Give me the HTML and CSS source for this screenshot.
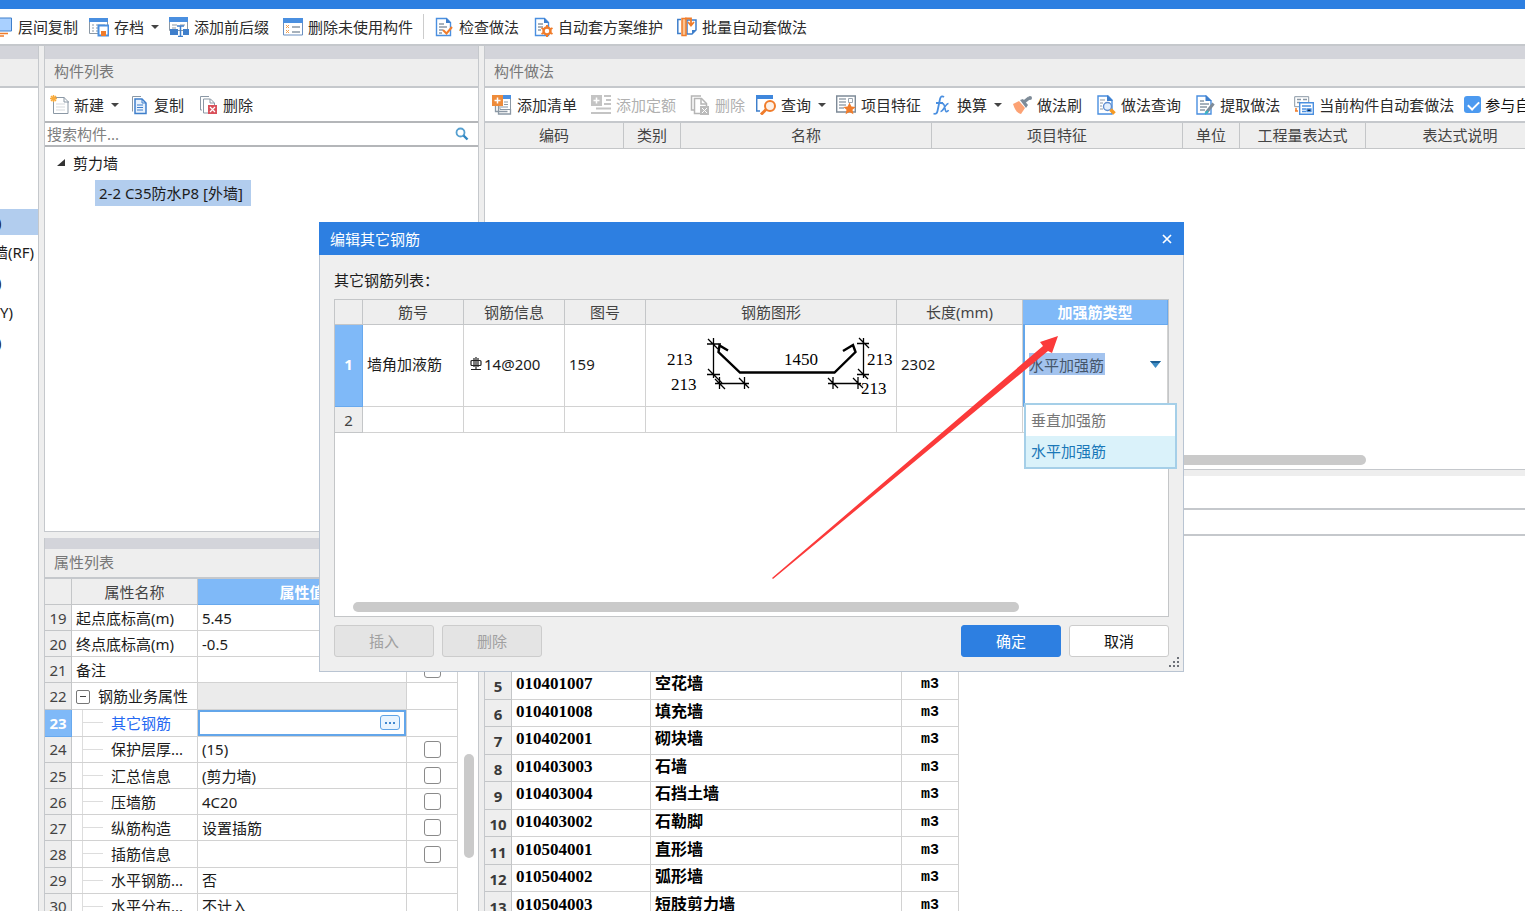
FILE: index.html
```html
<!DOCTYPE html>
<html lang="zh-CN">
<head>
<meta charset="utf-8">
<title>编辑其它钢筋</title>
<link rel="stylesheet" href="styles.css">
</head>
<body>
<div class="app">
  <div class="window-edge"></div>
  <div class="toolbar main-toolbar">
    <button class="tool first"><svg class="ico" viewBox="0 0 20 20"><path d="M3 1h15.500v13H3z" fill="#a9d0ff" stroke="#3f7fcb"/><path d="M5 16.500h10M5 19h6" stroke="#f07c2b" stroke-width="1.500"/></svg>层间复制</button>
    <button class="tool drop"><svg class="ico" viewBox="0 0 20 20"><path d="M.5 1.500h18v15H.5z" fill="#fff" stroke="#8b98a5"/><path d="M0 1h19v4H0z" fill="#4a8fe0"/><path d="M3 8h2M7 8h9M3 11h2M7 11h3M3 14h2M7 14h2" stroke="#8b98a5"/><path d="M9.500 8.500h10v10h-10z" fill="#fff" stroke="#4a8fe0" stroke-width="2"/><path d="M12 14h5v5h-5z" fill="#f07c2b"/></svg>存档<i class="caret"></i></button>
    <button class="tool"><svg class="ico" viewBox="0 0 20 20"><path d="M.5 1.500h18v12H.5z" fill="#fff" stroke="#8b98a5"/><path d="M0 0h19v5H0z" fill="#4a8fe0"/><path d="M3 8h5M11 8h5M3 11h4" stroke="#8b98a5"/><path d="M1 12h8v6H1zM14 12h6v6h-6z" fill="#3f7fcb"/><path d="M8 9h7M11.500 9v10M9 19.500h5" stroke="#3f7fcb" stroke-width="1.500"/></svg>添加前后缀</button>
    <button class="tool"><svg class="ico" viewBox="0 0 20 20"><path d="M.5 2h19v16H.5z" fill="#fff" stroke="#6a8fc0"/><path d="M0 1h20v5H0z" fill="#4a8fe0"/><path d="M3 8l3 3M6 8l-3 3M3 13l3 3M6 13l-3 3" stroke="#f5a04d"/><path d="M9 10h8M9 15h8" stroke="#8b98a5" stroke-width="1.500"/></svg>删除未使用构件</button>
    <span class="divider"></span>
    <button class="tool"><svg class="ico" viewBox="0 0 20 20"><path d="M2.500 1.500h10l4 4v13h-14z" fill="#fff" stroke="#4a8fe0" stroke-width="1.400"/><path d="M12 1v5h5z" fill="#3f7fcb"/><path d="M5 7h5M5 10h8M5 13h4M5 16h3" stroke="#8b98a5" stroke-width="1.300"/><path d="M9 13l3.500 3.500L18 10" fill="none" stroke="#f07c2b" stroke-width="2"/></svg>检查做法</button>
    <button class="tool"><svg class="ico" viewBox="0 0 20 20"><path d="M2.500 1.500h9l4 4v13h-13z" fill="#fff" stroke="#4a8fe0" stroke-width="1.400"/><path d="M11 1v5h5z" fill="#3f7fcb"/><path d="M5 7h5M5 10h5M5 13h3" stroke="#8b98a5" stroke-width="1.300"/><circle cx="14" cy="14" r="3.500" fill="#fff" stroke="#f07c2b" stroke-width="2.500"/><path d="M14 8v3M14 17v3M8.500 11l2.500 1.500M17 15.500l2.500 1.500M8.500 17l2.500-1.500M17 12.500l2.500-1.500" stroke="#f07c2b" stroke-width="2"/></svg>自动套方案维护</button>
    <button class="tool"><svg class="ico" viewBox="0 0 20 20"><path d="M4 2.500H.8v14H4" fill="none" stroke="#3f7fcb" stroke-width="1.500"/><path d="M10 3h9v10l-4 4h-5z" fill="#fff" stroke="#3f7fcb" stroke-width="1.500"/><path d="M15 17v-4h4z" fill="#3f7fcb"/><path d="M5 1.500h4v17H5z" fill="#fbc392" stroke="#f07c2b" stroke-width="1.500"/><path d="M8 1.500h6v6M11 5l3 3.500L17 5" fill="none" stroke="#f07c2b" stroke-width="1.800"/></svg>批量自动套做法</button>
  </div>

  <div class="workspace">
    <aside class="pane nav-pane">
      <div class="strip"></div>
      <div class="pane-title"></div>
      <ul class="nav-list">
        <li class="sel">)</li>
        <li class="mid">墙(RF)</li>
        <li>)</li>
        <li class="short">Y)</li>
        <li>)</li>
      </ul>
    </aside>

    <div class="column mid-column">
      <section class="pane grow">
        <div class="strip"></div>
        <h2 class="pane-title">构件列表</h2>
        <div class="toolbar">
          <button class="tool drop"><svg class="ico" viewBox="0 0 20 20"><path d="M6 2.500h9l4 4v12H4.500V6" fill="#fff" stroke="#8b98a5"/><path d="M15 2v5h5" fill="none" stroke="#8b98a5"/><path d="M7 9h9M7 12h9M7 15h9" stroke="#d5d9dd"/><path d="M2 1l5 5M7 1L2 6M4.500 0v7M1 3.500h7" stroke="#f9ab3c" stroke-width="1.500"/></svg>新建<i class="caret"></i></button>
          <button class="tool"><svg class="ico" viewBox="0 0 20 20"><path d="M12 1.500H3.500v15" fill="none" stroke="#8b98a5"/><path d="M6 4h7l4 4v10.500H6z" fill="#e9f2fd" stroke="#3f7fcb" stroke-width="1.500"/><path d="M13 4v4h4M8 10h6M8 12.500h6M8 15h6" fill="none" stroke="#3f7fcb"/></svg>复制</button>
          <button class="tool"><svg class="ico" viewBox="0 0 20 20"><path d="M11 1.500H2.500V15H4" fill="none" stroke="#8b98a5"/><path d="M5.500 4h7l4 4v10h-11z" fill="#fff" stroke="#8b98a5"/><path d="M12 4v4h4" fill="none" stroke="#8b98a5"/><path d="M10 10h9v9h-9z" fill="#d9505a"/><path d="M12 12l5 5M17 12l-5 5" stroke="#fff" stroke-width="1.200"/></svg>删除</button>
        </div>
        <div class="search">
          <input type="text" placeholder="搜索构件..." aria-label="搜索构件">
          <svg class="lens" viewBox="0 0 14 14"><circle cx="5.500" cy="5.500" r="4" fill="none" stroke="#56a0d0" stroke-width="1.800"/><path d="M8.500 8.500L12.500 12.500" stroke="#2f86c2" stroke-width="2.400"/></svg>
        </div>
        <ul class="tree">
          <li class="tree-root"><svg class="twisty" viewBox="0 0 8 8"><path d="M8 0v7H0z" fill="#333"/></svg>剪力墙</li>
          <li><span class="tree-sel">2-2 C35防水P8 [外墙]</span></li>
        </ul>
      </section>

      <section class="pane props-pane">
        <div class="strip"></div>
        <h2 class="pane-title">属性列表</h2>
        <div class="props-body">
          <table class="grid props">
            <colgroup><col class="w-num"><col class="w-name"><col class="w-value"><col class="w-check"></colgroup>
            <thead><tr><th></th><th>属性名称</th><th class="active">属性值</th><th></th></tr></thead>
            <tbody>
              <tr><th>19</th><td>起点底标高(m)</td><td>5.45</td><td></td></tr>
              <tr><th>20</th><td>终点底标高(m)</td><td>-0.5</td><td></td></tr>
              <tr><th>21</th><td>备注</td><td></td><td class="chk"><input type="checkbox" aria-label="备注"></td></tr>
              <tr><th>22</th><td><button class="fold" aria-label="折叠"></button>钢筋业务属性</td><td class="shade"></td><td></td></tr>
              <tr><th class="active">23</th><td class="child link">其它钢筋</td><td class="editing"><div class="editor"><button class="more" aria-label="编辑"><i></i><i></i><i></i></button></div></td><td></td></tr>
              <tr><th>24</th><td class="child">保护层厚...</td><td>(15)</td><td class="chk"><input type="checkbox" aria-label="保护层厚"></td></tr>
              <tr><th>25</th><td class="child">汇总信息</td><td>(剪力墙)</td><td class="chk"><input type="checkbox" aria-label="汇总信息"></td></tr>
              <tr><th>26</th><td class="child">压墙筋</td><td>4C20</td><td class="chk"><input type="checkbox" aria-label="压墙筋"></td></tr>
              <tr><th>27</th><td class="child">纵筋构造</td><td>设置插筋</td><td class="chk"><input type="checkbox" aria-label="纵筋构造"></td></tr>
              <tr><th>28</th><td class="child">插筋信息</td><td></td><td class="chk"><input type="checkbox" aria-label="插筋信息"></td></tr>
              <tr><th>29</th><td class="child">水平钢筋...</td><td>否</td><td></td></tr>
              <tr><th>30</th><td class="child">水平分布...</td><td>不计入</td><td></td></tr>
            </tbody>
          </table>
          <div class="vscroll"><div class="vthumb"></div></div>
        </div>
      </section>
    </div>

    <div class="column right-column">
      <section class="pane grow open-right">
        <div class="strip"></div>
        <h2 class="pane-title">构件做法</h2>
        <div class="toolbar">
          <button class="tool"><svg class="ico" viewBox="0 0 20 20"><path d="M8 1.500h10.500v13H8z" fill="#fff" stroke="#8b98a5"/><path d="M10 0h9v4h-9z" fill="#4a8fe0"/><path d="M3.500 11v5.500h12M6.500 11v8h12V14" fill="none" stroke="#8b98a5" stroke-width="1.300"/><path d="M12 7h4M12 9.500h4M9 12h7" stroke="#8b98a5"/><path d="M0 0h11v11H0z" fill="#ee8b3a"/><path d="M5.500 2.500v6M2.500 5.500h6" stroke="#fff" stroke-width="1.500"/></svg>添加清单</button>
          <button class="tool" disabled><svg class="ico" viewBox="0 0 20 20"><path d="M0 0h11v11H0z" fill="#c4c4c4"/><path d="M5.500 2.500v6M2.500 5.500h6" stroke="#fff" stroke-width="1.500"/><path d="M13 1h7M15 5h5M13 9h7M5 13.500h15M0 18h20" stroke="#c4c4c4" stroke-width="2"/></svg>添加定额</button>
          <button class="tool" disabled><svg class="ico" viewBox="0 0 20 20"><path d="M11 1H1.500v14H4" fill="none" stroke="#b5b5b5" stroke-width="1.500"/><path d="M4.500 3.500h7l5 5v10h-12z" fill="#fff" stroke="#b5b5b5" stroke-width="1.500"/><path d="M11 3v6h6" fill="none" stroke="#b5b5b5" stroke-width="1.500"/><path d="M10 11h9v9h-9z" fill="#bbb"/><path d="M12 13l5 5M17 13l-5 5" stroke="#fff"/></svg>删除</button>
          <button class="tool drop"><svg class="ico" viewBox="0 0 20 20"><path d="M.7 3v13H4M16 6v2" fill="none" stroke="#3f7fcb" stroke-width="1.500"/><path d="M0 0h17v4H0z" fill="#3f87dc"/><circle cx="14" cy="11" r="5" fill="#fdf0e6" stroke="#f07c2b" stroke-width="2"/><path d="M10 14.500L5 19.500" stroke="#f07c2b" stroke-width="3"/></svg>查询<i class="caret"></i></button>
          <button class="tool"><svg class="ico" viewBox="0 0 20 20"><path d="M.7 1h18.600v16H.7z" fill="#fff" stroke="#7e8b98" stroke-width="1.400"/><path d="M3 4h7M3 7h7M3 10h7M3 13h5" stroke="#9aa5b0" stroke-width="1.500"/><path d="M12.500 3.500h4v4h-4z" fill="none" stroke="#9aa5b0"/><path d="M13.500 7.500l1.900 3.900 4.300.5-3.200 2.900.9 4.500-3.900-2.200-3.900 2.200.9-4.500-3.200-2.900 4.300-.5z" fill="#f07c2b"/></svg>项目特征</button>
          <button class="tool drop"><svg class="ico" viewBox="0 0 20 20"><path d="M12 2c-2-1.500-3.500-.5-4 2L5.500 16c-.5 2.500-2 3.500-4 2.500M4 8h7" fill="none" stroke="#4a8fe0" stroke-width="1.800"/><path d="M9.500 8.500c4-1 3 7 4.500 8 1 .5 2-.5 2.500-1.500M16.500 8.500c-3 0-5 8-8 8" fill="none" stroke="#4a8fe0" stroke-width="1.600"/></svg>换算<i class="caret"></i></button>
          <button class="tool"><svg class="ico" viewBox="0 0 20 20"><path d="M7 6l6 7-4 6c-4-1-6-4-8-10z" fill="#fca274"/><path d="M8 5l3-1 5 6-2 3z" fill="#7e8b98"/><path d="M12 7l5-4" stroke="#7e8b98" stroke-width="3.500"/><circle cx="18" cy="3" r="2" fill="#7e8b98"/></svg>做法刷</button>
          <button class="tool"><svg class="ico" viewBox="0 0 20 20"><path d="M2 1h10l4 4v14H2z" fill="#fff" stroke="#4a8fe0" stroke-width="1.400"/><path d="M11 0v6h6z" fill="#3f7fcb"/><path d="M4 5h5M4 8h3M4 11h2M4 14h3" stroke="#8b98a5"/><circle cx="11.500" cy="11.500" r="4" fill="#e3effc" stroke="#5f8ed0" stroke-width="1.400"/><path d="M14.500 14.500l4 4" stroke="#f59a23" stroke-width="3.500"/></svg>做法查询</button>
          <button class="tool"><svg class="ico" viewBox="0 0 20 20"><path d="M2 1h9l5 5v13H2z" fill="#fff" stroke="#4a8fe0" stroke-width="1.400"/><path d="M10.500 0v6H17z" fill="#3f7fcb"/><path d="M5 6h4M5 9h9M5 12h7M5 15h5" stroke="#8b98a5" stroke-width="1.300"/><path d="M18.500 8.500L11 18" stroke="#7e8b98" stroke-width="3"/><path d="M13 16l-3 3" stroke="#35b6c9" stroke-width="2"/></svg>提取做法</button>
          <button class="tool"><svg class="ico" viewBox="0 0 20 20"><path d="M.7 1.700h14v10H.7z" fill="#fff" stroke="#8b98a5"/><path d="M3 4.500h4M9 4.500h4M3 7.500h3" stroke="#8b98a5" stroke-width="1.500"/><path d="M5.700 7.700h13.600v11.600H5.700z" fill="#fff" stroke="#4a8fe0" stroke-width="1.400"/><path d="M8 11h9M8 14h4M8 16.500h4M13 14h4v2.500h-4z" stroke="#4a8fe0" stroke-width="1.300"/><path d="M2 13v3M1 16h3" stroke="#f07c2b" stroke-width="1.500"/></svg>当前构件自动套做法</button>
          <label class="join"><input type="checkbox" checked>参与自动套</label>
        </div>
        <table class="grid works-head">
          <colgroup><col class="c-code"><col class="c-kind"><col class="c-wide"><col class="c-wide"><col class="c-kind"><col class="c-expr"><col></colgroup>
          <thead><tr><th>编码</th><th>类别</th><th>名称</th><th>项目特征</th><th>单位</th><th>工程量表达式</th><th>表达式说明</th></tr></thead>
        </table>
        <div class="works-empty"><div class="hthumb"></div></div>
      </section>
      <section class="library">
        <div class="lib-tabs"></div>
        <div class="lib-filter"></div>
        <div class="lib-body">
          <table class="grid lib">
            <colgroup><col class="w-num"><col class="c-code"><col class="c-wide"><col class="c-kind"></colgroup>
            <tbody>
              <tr><th>5</th><td>010401007</td><td>空花墙</td><td class="unit">m3</td></tr>
              <tr><th>6</th><td>010401008</td><td>填充墙</td><td class="unit">m3</td></tr>
              <tr><th>7</th><td>010402001</td><td>砌块墙</td><td class="unit">m3</td></tr>
              <tr><th>8</th><td>010403003</td><td>石墙</td><td class="unit">m3</td></tr>
              <tr><th>9</th><td>010403004</td><td>石挡土墙</td><td class="unit">m3</td></tr>
              <tr><th>10</th><td>010403002</td><td>石勒脚</td><td class="unit">m3</td></tr>
              <tr><th>11</th><td>010504001</td><td>直形墙</td><td class="unit">m3</td></tr>
              <tr><th>12</th><td>010504002</td><td>弧形墙</td><td class="unit">m3</td></tr>
              <tr><th>13</th><td>010504003</td><td>短肢剪力墙</td><td class="unit">m3</td></tr>
            </tbody>
          </table>
        </div>
      </section>
    </div>
  </div>

  <div class="dialog" role="dialog" aria-labelledby="dlg-title">
    <div class="dialog-bar">
      <h1 id="dlg-title">编辑其它钢筋</h1>
      <button class="close" aria-label="关闭"><svg viewBox="0 0 10 10"><path d="M1 1l8 8M9 1L1 9" stroke="#fff" stroke-width="1.700"/></svg></button>
    </div>
    <div class="dialog-body">
      <p class="caption">其它钢筋列表：</p>
      <div class="list-box">
        <table class="grid bars">
          <colgroup><col class="b-num"><col class="b-mid"><col class="b-mid"><col class="b-small"><col class="c-wide"><col class="c-expr"><col></colgroup>
          <thead><tr><th></th><th>筋号</th><th>钢筋信息</th><th>图号</th><th>钢筋图形</th><th>长度(mm)</th><th class="active">加强筋类型</th></tr></thead>
          <tbody>
            <tr class="tall">
              <th class="active">1</th><td>墙角加液筋</td>
              <td><span class="rebar"><svg class="grade" viewBox="0 0 12 14"><path d="M6 0v13M1 12.500h10M2 3.500h8a1 1 0 0 1 1 1v3a1 1 0 0 1-1 1H2a1 1 0 0 1-1-1v-3a1 1 0 0 1 1-1zM4 1v9M8 1v9" fill="none" stroke="#222" stroke-width="1.200"/></svg>14@200</span></td>
              <td>159</td>
              <td class="figure">
                <svg class="shape" viewBox="0 0 250 80">
                  <g fill="none" stroke="#000" stroke-width="1.300">
                    <path d="M67.500 13v40M61 19h14M61 49.500h13M62 14l10 10M62 44l14 14"/>
                    <path d="M69 58.500h34M73.500 52v12M98.500 52v12M69 54l10 10M93 53l10 10"/>
                    <path d="M217.500 13v40M211 18.500h12M211 49.500h12M213 13l10 10M212 44l10 10"/>
                    <path d="M182 58.500h33M187 52v12M212 52v12M182 53l10 10M207 53l10 10"/>
                  </g>
                  <path d="M82 25.500L73.500 20.500L72.500 27L94 47.500H188.500L209.500 27L207 20L197 26" fill="none" stroke="#000" stroke-width="2.400"/>
                  <g class="dims"><text x="21" y="40">213</text><text x="25" y="65">213</text><text x="138" y="40">1450</text><text x="221" y="40">213</text><text x="215" y="69">213</text></g>
                </svg>
              </td>
              <td>2302</td>
              <td class="combo-cell">
                <div class="combo">
                  <input type="text" role="combobox" aria-expanded="true" aria-controls="kinds" aria-label="加强筋类型" value="水平加强筋">
                  <svg class="combo-arrow" viewBox="0 0 11 7"><path d="M0 0h11L5.500 7z" fill="#3d8cc4"/><path d="M0 0h11L9 2H2z" fill="#1d5f94"/></svg>
                </div>
                <ul class="options" id="kinds" role="listbox">
                  <li role="option">垂直加强筋</li>
                  <li role="option" class="on" aria-selected="true">水平加强筋</li>
                </ul>
              </td>
            </tr>
            <tr><th>2</th><td></td><td></td><td></td><td></td><td></td><td></td></tr>
          </tbody>
        </table>
        <div class="dlg-thumb"></div>
      </div>
      <div class="actions">
        <button class="btn" disabled>插入</button>
        <button class="btn" disabled>删除</button>
        <span class="spacer"></span>
        <button class="btn primary">确定</button>
        <button class="btn plain">取消</button>
      </div>
    </div>
    <svg class="grip" viewBox="0 0 11 11"><path d="M8 0h2v2H8zM8 4h2v2H8zM4 4h2v2H4zM8 8h2v2H8zM4 8h2v2H4zM0 8h2v2H0z" fill="#6d7178"/></svg>
  </div>

  <svg class="pointer" viewBox="0 0 290 246"><path d="M286 2L268 8L271 12L0 244L1 245L276 17L280 19Z" fill="#fb3a3a"/></svg>
</div>
</body>
</html>
```
FILE: styles.css
```css
* { box-sizing: border-box; }
body {
  margin: 0;
  font: 15px/20px "Noto Sans", "Noto Sans CJK SC", sans-serif;
  color: #1c1c1c;
}
button, input { font: inherit; color: inherit; }
h1, h2, p, ul { margin: 0; padding: 0; font-size: 15px; font-weight: 400; list-style: none; }

.app { position: relative; display: flex; flex-direction: column; height: 100vh; overflow: hidden; background: #eee; }
.window-edge { flex: none; height: 9px; background: #2d7fe1; }

/* toolbars */
.toolbar { flex: none; display: flex; align-items: center; height: 33px; background: #fff; overflow: hidden; white-space: nowrap; }
.main-toolbar { height: 37px; border-bottom: 2px solid #c5c8cc; }
.tool { flex: none; display: flex; align-items: center; height: 24px; padding: 0 7px; border: 0; background: none; gap: 5px; color: #2b2b2b; }
.tool.first { margin-left: -14px; }
.tool.drop { padding: 0 3px 0 4px; }
.tool:disabled { color: #b0b0b0; }
.ico { flex: none; width: 20px; height: 20px; }
.caret { margin-left: 2px; border: 4px solid transparent; border-top-color: #444; border-bottom-width: 0; }
.divider { width: 1px; height: 25px; margin: 0 3px; background: #ccc; }
.join { display: flex; align-items: center; gap: 4px; padding-left: 3px; color: #111; }

/* check boxes */
input[type="checkbox"] { appearance: none; display: block; width: 17px; height: 17px; margin: 0; border: 1px solid #8a8a8a; border-radius: 3px; background: #fff; }
.join input[type="checkbox"] { position: relative; flex: none; border: 0; background: #4c9af0; }
.join input[type="checkbox"]::after { content: ""; position: absolute; left: 6px; top: 3px; width: 5px; height: 9px; border: solid #fff; border-width: 0 2px 2px 0; transform: rotate(45deg); }

/* panes */
.workspace { flex: 1; min-height: 0; display: flex; gap: 5px; }
.column { display: flex; flex-direction: column; min-width: 0; }
.mid-column { flex: none; width: 435px; gap: 6px; }
.right-column { flex: 1; }
.pane { display: flex; flex-direction: column; min-height: 0; background: #fff; border: 1px solid #c5c8cc; border-top: 0; }
.grow { flex: 1; }
.open-right { border-right: 0; overflow: hidden; }
.nav-pane { flex: none; width: 39px; border-left: 0; border-bottom: 0; overflow: hidden; }
.strip { flex: none; height: 13px; background: #d3d4da; }
.pane-title { flex: none; height: 29px; padding: 2px 9px; border-bottom: 2px solid #c5c8cc; background: #eee; color: #777; }

.nav-list { padding-top: 121px; }
.nav-list li { height: 26px; margin-bottom: 4px; line-height: 26px; text-indent: -3px; white-space: nowrap; }
.nav-list .sel { background: #b2cdee; }
.nav-list .mid { text-indent: -7px; }
.nav-list .short { text-indent: 0; }

.search { flex: none; display: flex; align-items: center; height: 26px; padding: 0 9px 0 2px; border: solid #b4b6b9; border-width: 2px 0; }
.search input { flex: 1; min-width: 0; height: 20px; padding: 0; border: 0; outline: 0; }
.search input::placeholder { color: #808080; opacity: 1; }
.lens { width: 14px; height: 14px; }
.tree { padding-top: 1px; }
.tree li { display: flex; align-items: center; height: 30px; padding-left: 50px; }
.tree .tree-root { gap: 8px; padding-left: 12px; }
.twisty { width: 8px; height: 8px; }
.tree-sel { padding: 3px 8px 3px 4px; line-height: 20px; background: #b2cdee; }

/* grids */
.grid { width: 100%; table-layout: fixed; border-spacing: 0; }
.grid th, .grid td { height: 26px; padding: 0 4px; border: solid #d2d2d2; border-width: 0 1px 1px 0; line-height: 20px; text-align: left; white-space: nowrap; overflow: hidden; }
.grid th { border-color: #c4c6c8; background: #eee; color: #444; font-weight: 400; text-align: center; }
.grid th.active { background: #7fb9f8; border-color: #68a9ee; color: #fff; font-weight: 700; }
.w-num { width: 27px; }
.w-name { width: 126px; }
.w-value { width: 209px; }
.w-check { width: 51px; }
.c-code { width: 139px; }
.c-kind { width: 57px; }
.c-wide { width: 251px; }
.c-expr { width: 126px; }
.b-num { width: 28px; }
.b-mid { width: 101px; }
.b-small { width: 81px; }

/* property list */
.props-pane { flex: none; height: 373px; border-bottom: 0; overflow: hidden; }
.props-pane .strip { height: 11px; }
.props-pane .pane-title { height: 30px; padding-top: 3px; }
.props-body { flex: 1; min-height: 0; display: flex; }
.grid.props { flex: none; width: 413px; height: 341px; }
.props tbody td:nth-child(2) { position: relative; }
.props .child { padding-left: 39px; }
.props .child::before { content: ""; position: absolute; left: 10px; top: 0; width: 1px; height: 100%; background: #ddd; }
.props .child::after { content: ""; position: absolute; left: 11px; top: 12px; width: 20px; height: 1px; background: #ddd; }
.props .link { color: #2468f2; }
.props .shade { background: #ebebeb; }
.props .chk { padding-left: 17px; }
.props .editing { padding: 0; }
.fold { position: relative; width: 14px; height: 14px; margin: 0 8px 0 0; padding: 0; border: 1px solid #777; border-radius: 2px; background: #fff; vertical-align: -1px; }
.fold::after { content: ""; position: absolute; left: 3px; top: 5px; width: 6px; height: 1px; background: #444; }
.editor { display: flex; align-items: center; justify-content: flex-end; height: 26px; padding-right: 4px; border: 2px solid #63a6ea; }
.more { display: flex; align-items: center; justify-content: center; gap: 2px; width: 20px; height: 15px; padding: 0; border: 1px solid #5fa3e6; border-radius: 3px; background: #e9f4ff; }
.more i { width: 2px; height: 2px; background: #3f87d0; }
.vscroll { flex: 1; padding: 175px 4px 0 6px; }
.vthumb { height: 104px; border-radius: 5px; background: #cacaca; }

/* works list */
.grid.works-head { flex: none; width: calc(100% + 30px); border-top: 2px solid #c5c8cc; }
.works-head th { padding-bottom: 1px; }
.works-empty { flex: 1; display: flex; align-items: flex-end; padding-bottom: 4px; }
.hthumb { width: 864px; height: 10px; margin-left: 17px; border-radius: 5px; background: #cacaca; }

/* bill library */
.library { flex: none; display: flex; flex-direction: column; height: 441px; padding-top: 6px; border-left: 1px solid #c5c8cc; }
.lib-tabs { flex: none; height: 34px; border-bottom: 2px solid #c5c8cc; background: #fff; }
.lib-filter { flex: none; height: 26px; border-bottom: 2px solid #c5c8cc; background: #fff; }
.lib-body { flex: 1; min-height: 0; padding-top: 136px; background: #fff; overflow: hidden; }
.grid.lib { width: 474px; height: 248px; }
.lib td { padding-bottom: 2px; font: 700 17px/20px "Liberation Serif", "Noto Sans CJK SC", serif; color: #000; }
.lib td:nth-child(3) { font-size: 16px; }
.lib th { padding: 2px 0 0; font-weight: 700; color: #3a3a3a; }
.lib .unit { padding-bottom: 0; font-family: "Liberation Mono", monospace; font-size: 15px; text-align: center; }

/* dialog */
.dialog { position: absolute; left: 319px; top: 222px; width: 865px; background: #efefef; border: 1px solid #b9c4d2; border-top: 0; }
.dialog-bar { display: flex; align-items: center; justify-content: space-between; height: 33px; margin: 0 -1px; padding: 0 12px 0 11px; background: #2d7fe1; color: #fff; }
.close { display: flex; padding: 0; border: 0; background: none; }
.close svg { width: 10px; height: 10px; }
.dialog-body { padding: 15px 14px 14px; }
.caption { height: 29px; }
.list-box { display: flex; flex-direction: column; justify-content: space-between; height: 318px; padding-bottom: 4px; border: 1px solid #c4c6c8; background: #fff; }
.dlg-thumb { width: 80%; height: 10px; margin-left: 18px; border-radius: 5px; background: #cacaca; }
.bars thead th { height: 25px; }
.bars .tall td, .bars .tall th { height: 82px; padding-bottom: 3px; }
.rebar { display: flex; align-items: center; gap: 2px; padding: 0 2px; }
.grade { width: 12px; height: 14px; }
.bars .tall .figure { padding: 0; vertical-align: top; }
.shape { display: block; width: 250px; height: 80px; }
.dims { font: 17px "Liberation Serif", serif; }
.bars .tall .combo-cell { position: relative; padding: 0 0 3px; overflow: visible; border-left: 2px solid #63a6ea; }
.combo { display: flex; align-items: center; justify-content: space-between; padding: 0 6px 0 4px; }
.combo input { width: 76px; height: 22px; padding: 0; border: 0; outline: 0; background: #a3c3ee; color: #46566b; }
.combo-arrow { width: 11px; height: 7px; }
.options { position: absolute; left: -1px; top: 78px; width: 153px; border: 2px solid #a5cfe8; background: #fff; }
.options li { height: 31px; padding: 0 5px; line-height: 31px; color: #777; }
.options .on { background: #daf2fa; color: #1a78b8; }
.actions { display: flex; gap: 8px; padding-top: 8px; }
.spacer { flex: 1; }
.btn { width: 100px; height: 32px; padding: 0; border: 1px solid #ccc; border-radius: 3px; background: #fff; color: #111; }
.btn:disabled { background: #e4e4e4; color: #a0a0a0; }
.btn.primary { border-color: #2d7fe1; background: #2d7fe1; color: #fff; }
.grip { position: absolute; right: 3px; bottom: 3px; width: 11px; height: 11px; }

.pointer { position: absolute; left: 772px; top: 334px; width: 290px; height: 246px; pointer-events: none; }
```
